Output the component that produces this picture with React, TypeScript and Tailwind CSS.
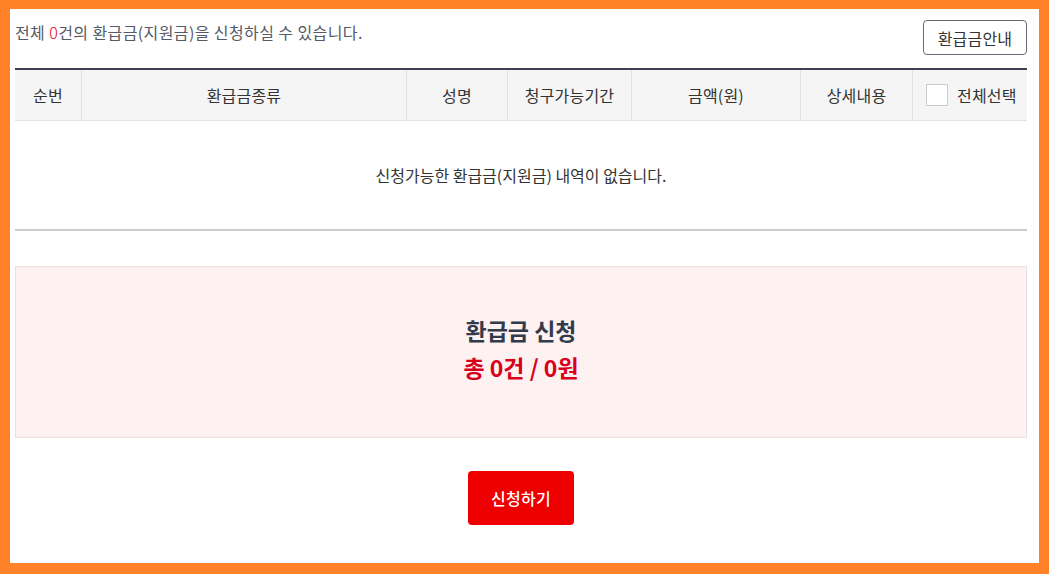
import React from "react";

const cols = [
  { label: "순번", w: "w-[67px]" },
  { label: "환급금종류", w: "w-[325px]" },
  { label: "성명", w: "w-[101px]" },
  { label: "청구가능기간", w: "w-[124px]" },
  { label: "금액(원)", w: "w-[169px]" },
  { label: "상세내용", w: "w-[112px]" },
];

export default function App() {
  return (
    <div
      className="w-[1049px] h-[574px] bg-[#ff8228] pt-[9px] pl-[10px] pr-[10px] pb-[11px]"
      style={{ fontFamily: '"Noto Sans CJK KR", "Noto Sans", sans-serif' }}
    >
      <div className="h-full bg-white pl-[5px] pr-[12px] pt-[11px]">
        <div className="flex items-start justify-between h-[35px]">
          <p className="text-[16px] leading-[22px] text-[#555a66] mt-[1px] tracking-[0.4px]">
            전체 <span className="text-[#e60012] font-light">0</span>건의 환급금(지원금)을 신청하실 수 있습니다.
          </p>
          <button className="h-[35px] w-[104px] border border-[#666b75] rounded-[4px] text-[16px] text-[#333] bg-white tracking-[0.2px]">
            환급금안내
          </button>
        </div>

        <div className="mt-[13px] border-t-2 border-[#3d4050]">
          <div className="flex h-[51px] bg-[#f5f5f5] border-b border-[#e2e2e2] text-[16px] text-[#333] tracking-[0.2px]">
            {cols.map((c) => (
              <div
                key={c.label}
                className={`${c.w} flex items-center justify-center border-r border-[#e2e2e2]`}
              >
                {c.label}
              </div>
            ))}
            <div className="w-[114px] flex items-center pl-[13px] gap-[9px]">
              <span className="w-[22px] h-[22px] border border-[#cccccc] bg-white" />
              <span>전체선택</span>
            </div>
          </div>
          <div className="h-[110px] flex items-center justify-center text-[16px] text-[#333] border-b-2 border-[#cbcdd0]">
            신청가능한 환급금(지원금) 내역이 없습니다.
          </div>
        </div>

        <div className="mt-[35px] h-[172px] bg-[#fdf1f1] border border-[#e6e0e2] flex flex-col items-center pt-[45px]">
          <div className="text-[23px] leading-[37px] font-bold text-[#333a4a]">환급금 신청</div>
          <div className="text-[23px] leading-[37px] font-bold text-[#d9001b]">총 0건 / 0원</div>
        </div>

        <div className="flex justify-center mt-[33px]">
          <button className="w-[106px] h-[54px] bg-[#ee0000] rounded-[4px] text-white text-[16px] font-medium tracking-[0.3px]">
            신청하기
          </button>
        </div>
      </div>
    </div>
  );
}
